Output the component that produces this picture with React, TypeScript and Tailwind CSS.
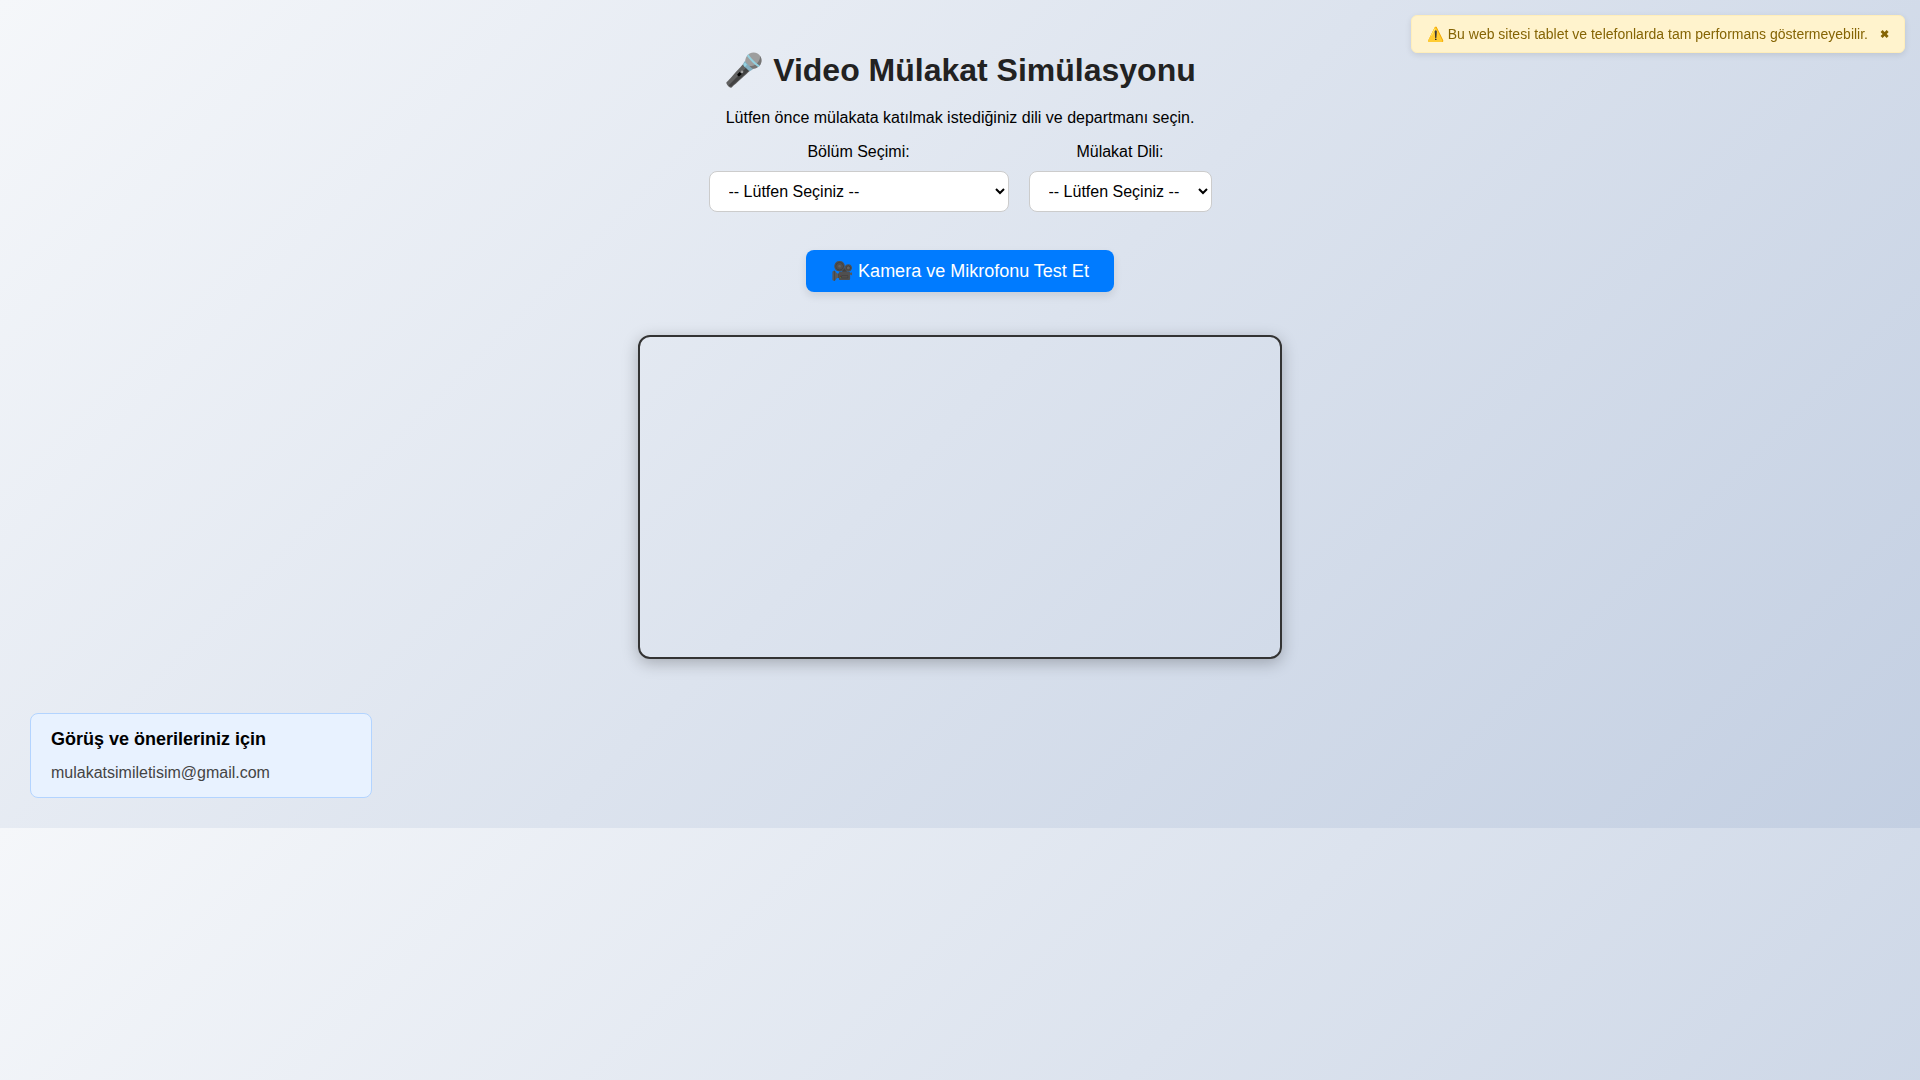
import { useState } from 'react'

const departments = [
  'Bilgisayar Mühendisliği',
  'Elektrik Mühendisliği',
  'Makine Mühendisliği',
  'İnsan Kaynakları',
]
const languages = ['Türkçe', 'English']

interface SelectFieldProps {
  id: string
  label: string
  options: string[]
  className?: string
}

const SelectField: React.FC<SelectFieldProps> = ({ id, label, options, className = '' }) => {
  return (
    <div className="flex flex-col items-center gap-[9px]">
      <label htmlFor={id} className="text-base leading-5">{label}</label>
      <select
        id={id}
        defaultValue=""
        className={`h-[41px] rounded-lg border border-[#ccc] bg-white px-[15px] text-base text-black ${className}`}
      >
        <option value="">-- Lütfen Seçiniz --</option>
        {options.map((option) => (
          <option key={option} value={option}>{option}</option>
        ))}
      </select>
    </div>
  )
}

const DeviceWarning: React.FC = () => {
  const [visible, setVisible] = useState(true)
  if (!visible) return null

  return (
    <div
      role="alert"
      className="fixed top-[15px] right-[15px] z-10 flex items-center gap-3 rounded-md border border-[#ffeeba] bg-[#fff3cd] px-[15px] py-[10px] text-sm leading-4 text-[#856404] shadow-[0_2px_6px_rgba(0,0,0,0.1)]"
    >
      <span>⚠️ Bu web sitesi tablet ve telefonlarda tam performans göstermeyebilir.</span>
      <button type="button" onClick={() => setVisible(false)} className="cursor-pointer text-[11px] leading-4 font-bold">
        ✖
      </button>
    </div>
  )
}

const App: React.FC = () => {
  return (
    <div className="min-h-screen bg-[linear-gradient(135deg,#f5f7fa,#c3cfe2)] bg-[length:100%_828px] font-['Liberation_Sans',Arial,sans-serif] text-black">
      <DeviceWarning />
      <main className="flex flex-col items-center px-5 pt-[50px] text-center">
        <h1 className="text-[32px] leading-10 font-bold text-[#222]">🎤 Video Mülakat Simülasyonu</h1>
        <p className="mt-[18px] text-base leading-5">
          Lütfen önce mülakata katılmak istediğiniz dili ve departmanı seçin.
        </p>
        <div className="mt-[14px] flex flex-wrap justify-center gap-5">
          <SelectField id="department" label="Bölüm Seçimi:" options={departments} className="w-[300px]" />
          <SelectField id="language" label="Mülakat Dili:" options={languages} />
        </div>
        <button
          type="button"
          className="mt-[38px] h-[42px] cursor-pointer rounded-lg bg-[#007bff] px-[25px] text-lg text-white shadow-[0_4px_8px_rgba(0,0,0,0.1)]"
        >
          🎥 Kamera ve Mikrofonu Test Et
        </button>
        <video className="mt-[43px] h-[324px] w-full max-w-[644px] rounded-xl border-2 border-[#333] shadow-[0_4px_16px_rgba(0,0,0,0.25)]" />
      </main>
      <footer className="px-[30px] pt-[54px] pb-[30px]">
        <section className="max-w-[342px] rounded-lg border border-[#b3d4ff] bg-[#e8f2ff] px-5 pt-[15px] pb-[14px]">
          <h2 className="text-lg leading-5 font-bold">Görüş ve önerileriniz için</h2>
          <p className="mt-[14px] text-base leading-5 text-[#444]">mulakatsimiletisim@gmail.com</p>
        </section>
      </footer>
    </div>
  )
}

export default App
